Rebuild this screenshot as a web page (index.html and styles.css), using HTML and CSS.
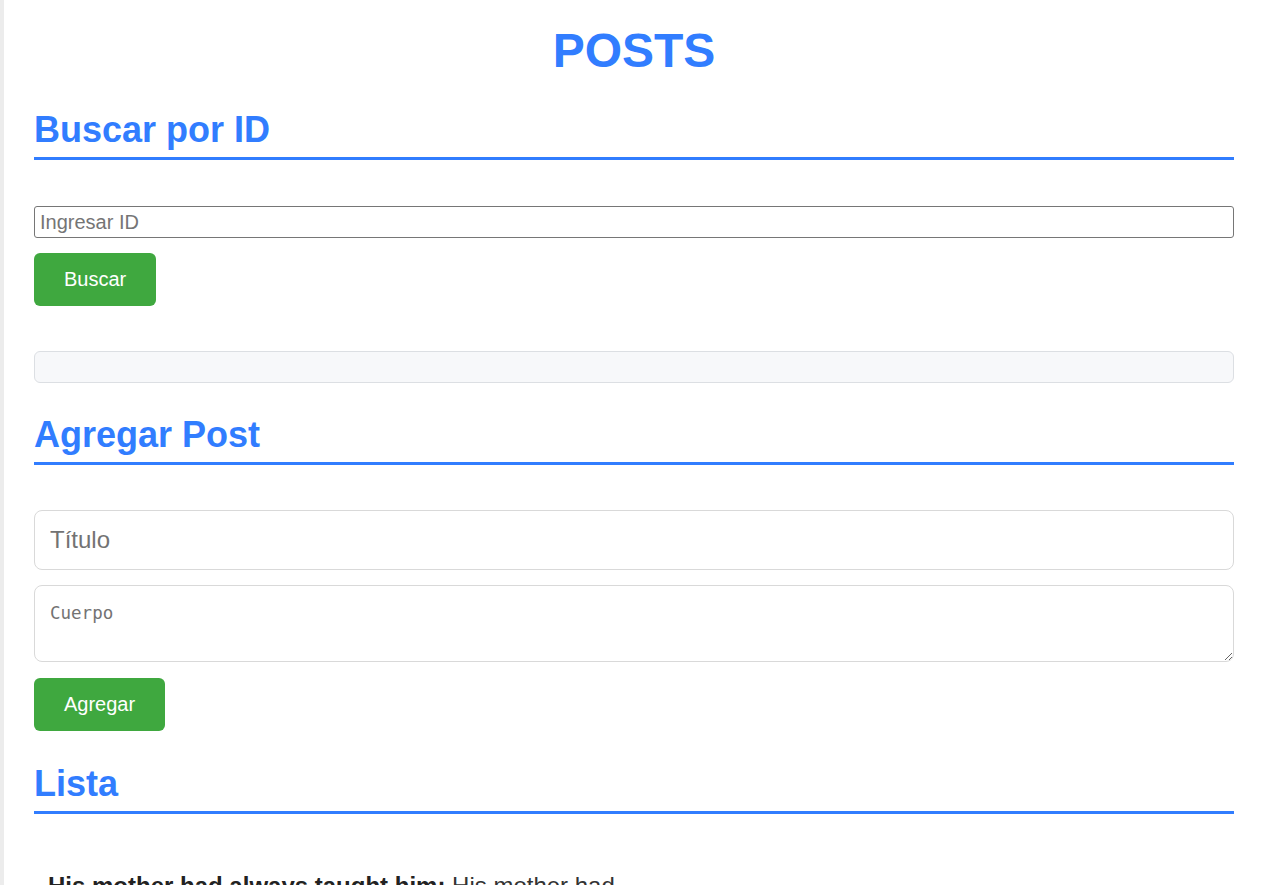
FILE: index.html
```html
<!DOCTYPE html>
<html lang="es">
<head>
<meta charset="utf-8">
<title>Posts</title>
<link rel="stylesheet" href="styles.css">
</head>
<body>
<div class="container">
  <h1 class="title">POSTS</h1>

  <section class="section">
    <h2 class="section-title">Buscar por ID</h2>
    <input class="id-input" type="text" placeholder="Ingresar ID">
    <button class="btn btn-search">Buscar</button>
    <div class="result"></div>
  </section>

  <section class="section">
    <h2 class="section-title">Agregar Post</h2>
    <input class="field" type="text" placeholder="Título">
    <textarea class="field area" placeholder="Cuerpo"></textarea>
    <button class="btn btn-add">Agregar</button>
  </section>

  <section class="section section-list">
    <h2 class="section-title">Lista</h2>
    <ul class="post-list">
      <li class="post-item">
        <p class="post-text"><strong>His mother had always taught him:</strong> His mother had always taught him not to ever think of himself as better than others.</p>
      </li>
    </ul>
  </section>
</div>
</body>
</html>
```
FILE: styles.css
```css
html, body {
  margin: 0;
  padding: 0;
}
body {
  background: #ececec;
  font-family: "Liberation Sans", Arial, sans-serif;
  color: #333;
}
.container {
  margin-left: 4px;
  background: #ffffff;
  padding: 23px 30px 40px;
  min-height: 900px;
}
.title {
  margin: 0;
  font-size: 48px;
  line-height: 55px;
  font-weight: 700;
  text-align: center;
  color: #317dff;
}
.section-title {
  margin: 31px 0 0;
  font-size: 36px;
  line-height: 41px;
  font-weight: 700;
  color: #317dff;
  padding-bottom: 7px;
  border-bottom: 3px solid #317dff;
}
.section-list .section-title {
  margin-top: 32px;
}
.id-input {
  display: block;
  box-sizing: border-box;
  width: 100%;
  height: 32px;
  margin-top: 46px;
  padding: 3px 5px;
  font-family: "Liberation Sans", Arial, sans-serif;
  font-size: 20px;
  border: 1px solid #767676;
  border-radius: 3px;
  color: #222;
}
.id-input::placeholder {
  color: #757575;
}
.btn {
  display: block;
  box-sizing: border-box;
  height: 53px;
  padding: 0 30px;
  border: none;
  border-radius: 6px;
  background: #3fa83f;
  color: #ffffff;
  font-family: "Liberation Sans", Arial, sans-serif;
  font-size: 20px;
  cursor: pointer;
}
.btn-search {
  margin-top: 15px;
}
.btn-add {
  margin-top: 16px;
}
.result {
  box-sizing: border-box;
  height: 32px;
  margin-top: 45px;
  background: #f7f8fa;
  border: 1px solid #dcdfe3;
  border-radius: 6px;
}
.field {
  display: block;
  box-sizing: border-box;
  width: 100%;
  border: 1px solid #d9d9d9;
  border-radius: 8px;
  padding: 15px;
  background: #fff;
  color: #222;
}
input.field {
  height: 60px;
  margin-top: 45px;
  font-family: "Liberation Sans", Arial, sans-serif;
  font-size: 24px;
}
.field::placeholder {
  color: #737373;
}
.area {
  height: 77px;
  margin-top: 15px;
  font-family: "DejaVu Sans Mono", "Liberation Mono", monospace;
  font-size: 17.5px;
  line-height: 24px;
  resize: both;
}
.post-list {
  list-style: none;
  margin: 44px 0 0;
  padding: 0;
}
.post-item {
  padding: 14px 14px;
}
.post-text {
  margin: 0;
  max-width: 600px;
  font-size: 24px;
  color: #333;
}
.post-text strong {
  color: #222;
}
```
